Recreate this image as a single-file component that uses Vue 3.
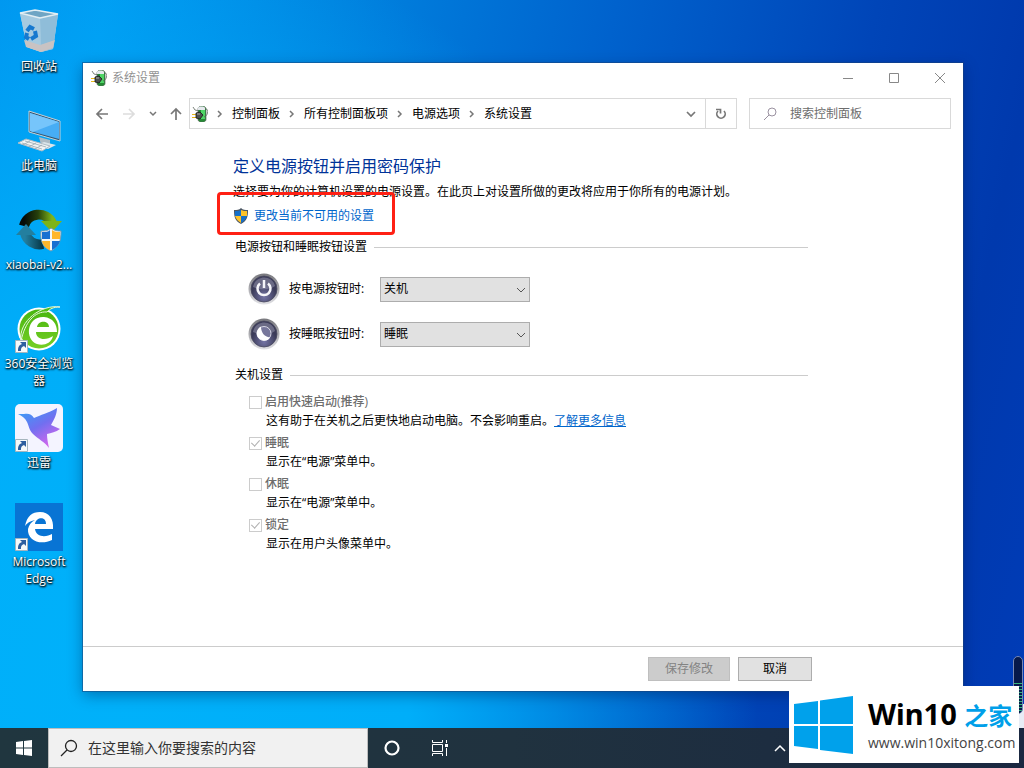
<template>
  <div class="desktop">
    <nav class="desktop-icons">
      <a v-for="item in shortcuts" :key="item.id" href="#" class="desktop-icon" @click.prevent>
        <span class="desktop-icon__picture">
          <svg v-if="item.id === 'recycle'" viewBox="0 0 48 48">
            <path d="M5 5l15-3 23 4-5 35-12 3-14-5z" fill="#b9d7e8" />
            <path d="M5 5l20 5 1 34-14-5z" fill="#a5cae0" />
            <path d="M25 10l18-4-5 35-12 3z" fill="#8fbdd9" />
            <path d="M5 5l15-3 23 4-18 4z" fill="#6fa5c4" stroke="#e2eef3" stroke-width="1.5" />
            <path d="M9 32l16 5 1 7-15-5zM25 37l15-5-2 8-12 4z" fill="#c9c3c3" />
            <g fill="none" stroke="#1679cf" stroke-width="4">
              <path d="M12 23l3-4 4 2" /><path d="M20 23l1 5-5 3" /><path d="M14 31l-3-2 1-4" />
            </g>
          </svg>
          <svg v-else-if="item.id === 'pc'" viewBox="0 0 48 48">
            <path d="M24 30l11 3v4l-9 1z" fill="#aebbc4" />
            <path d="M21 38l8-3 12 3-8 4z" fill="#dce5ea" />
            <path d="M14 4l31 10v20L14 25z" fill="#35536b" stroke="#c2d3dd" />
            <path d="M15 6l29 9v17l-29-8z" fill="#47adf5" />
            <path d="M15 6l29 9-26 10-3-1z" fill="#76c5fb" />
            <path d="M3 36l8-4 24 7-8 5z" fill="#f2f4f5" stroke="#aebcc5" />
            <path d="M7 36l20 6M10 34l21 6M8 38l7-4M14 40l7-4M20 42l7-4" stroke="#9ba8b0" stroke-width=".8" />
          </svg>
          <svg v-else-if="item.id === 'xiaobai'" viewBox="0 0 48 48">
            <defs>
              <linearGradient id="ringTop"><stop stop-color="#050b06" /><stop offset=".5" stop-color="#26400c" /><stop offset="1" stop-color="#7db31a" /></linearGradient>
              <linearGradient id="ringBottom"><stop stop-color="#237f9f" /><stop offset="1" stop-color="#063646" /></linearGradient>
            </defs>
            <path d="M9 20A15 15 0 0 1 37 17" fill="none" stroke="url(#ringTop)" stroke-width="10" />
            <path d="M26 15h21L37 26z" fill="#7db31a" />
            <path d="M10 27A15 15 0 0 0 28 38" fill="none" stroke="url(#ringBottom)" stroke-width="10" />
            <path d="M1 29l10-11 10 11z" fill="#237f9f" />
            <path d="M36 22c4 3 7 3 10 3 0 11-2 15-10 20-8-4-11-9-10-20 4 0 7 0 10-3z" fill="#f4f7f8" stroke="#7b9bae" />
            <path d="M35 24v9h-8v-7c4 0 6 0 8-2zM37 35h8c-1 4-4 7-8 9z" fill="#176fd1" />
            <path d="M37 24c3 2 5 2 8 2v7h-8zM27 35h8v9c-5-2-7-5-8-9z" fill="#ffb72c" />
          </svg>
          <svg v-else-if="item.id === 'browser'" viewBox="0 0 48 48">
            <defs>
              <linearGradient id="leaf" x2="0" y2="1"><stop stop-color="#48b50e" /><stop offset="1" stop-color="#75cf25" /></linearGradient>
            </defs>
            <circle cx="24" cy="24" r="21.500" fill="#fff" />
            <circle cx="24" cy="24" r="19.500" fill="url(#leaf)" />
            <path d="M6 36C3 16 27-1 45 2c-7 0-10 2-13 5C20 6 10 17 6 36z" fill="#52bd15" stroke="#e6f6db" />
            <path fill-rule="evenodd" d="M42 27H21c0 8 10 9 17 4-2 8-10 10-16 8-13-5-10-28 7-27 9 1 13 7 13 15zM22 22h12c0-7-11-7-12 0z" fill="#fff" />
          </svg>
          <svg v-else-if="item.id === 'thunder'" viewBox="0 0 48 48">
            <defs>
              <linearGradient id="bird" x1="0" y1="0" x2=".6" y2="1"><stop stop-color="#31a5f7" /><stop offset=".55" stop-color="#716ff0" /><stop offset="1" stop-color="#cf67ed" /></linearGradient>
            </defs>
            <rect width="48" height="48" rx="5" fill="#f4f4ff" />
            <path d="M3 10l6 0c4-1 8 0 10 4 6-3 15-5 23-10 0 6-3 12-6 17l9 4c-4 3-9 4-13 5 0 5 1 9 2 14-4-6-11-9-16-14-4-4-4-8-6-12-2-4-5-6-9-8z" fill="url(#bird)" />
          </svg>
          <svg v-else viewBox="0 0 48 48">
            <rect width="48" height="48" fill="#0874d4" />
            <path d="M10 23C12 13 17 9 25 9c9 0 14 7 13 17H20c1 9 12 8 17 5v6c-12 6-25 0-24-11 1-4 3-7 7-9-5 1-8 3-10 6zM20 21h11c0-8-10-7-11 0z" fill="#fff" fill-rule="evenodd" />
          </svg>
          <svg v-if="item.linked" class="desktop-icon__arrow" viewBox="0 0 13 13">
            <path d="M.5.5h12v12H.5z" fill="#f7f9fa" stroke="#a5b5be" />
            <path d="M5 2h6v6L9 6c-3 1-3 3-3 5H3c0-4 1-6 4-7z" fill="#2e5e9f" />
          </svg>
        </span>
        <span class="desktop-icon__label">{{ item.label }}</span>
      </a>
    </nav>

    <main class="window">
      <header class="titlebar">
        <svg class="power-icon" viewBox="0 0 16 16"><use href="#powerPlug" /></svg>
        <span class="titlebar__text">系统设置</span>
        <button type="button" class="titlebar__button" aria-label="最小化">
          <svg viewBox="0 0 12 12"><path d="M1 6.500h10" /></svg>
        </button>
        <button type="button" class="titlebar__button" aria-label="最大化">
          <svg viewBox="0 0 12 12"><path d="M1.500 1.500h9v9h-9z" /></svg>
        </button>
        <button type="button" class="titlebar__button" aria-label="关闭">
          <svg viewBox="0 0 12 12"><path d="M1 1l10 10M11 1L1 11" /></svg>
        </button>
      </header>

      <div class="toolbar">
        <div class="toolbar__history">
          <button type="button" aria-label="后退"><svg viewBox="0 0 16 16"><path d="M14 8H3M8 3L3 8l5 5" /></svg></button>
          <button type="button" aria-label="前进" disabled><svg viewBox="0 0 16 16"><path d="M2 8h11M8 3l5 5-5 5" /></svg></button>
          <button type="button" class="toolbar__recent" aria-label="最近"><svg viewBox="0 0 8 16"><path d="M1 6l3 3 3-3" /></svg></button>
          <button type="button" aria-label="向上"><svg viewBox="0 0 16 16"><path d="M8 14V3M3 8l5-5 5 5" /></svg></button>
        </div>
        <div class="address">
          <svg class="power-icon" viewBox="0 0 16 16">
            <g id="powerPlug">
              <path d="M6 3c0-4 8-4 8 0v11c-1 3-7 3-8 0z" fill="#258a35" stroke="#5d655e" stroke-width=".7" />
              <path d="M6 2c0-2 7-2 7 0v2H6z" fill="#e5e9ed" />
              <path d="M9 4h4v9H9z" fill="#4fd566" />
              <path d="M1 1l2 3 4 1M14 3c3 0 2 7-2 8" fill="none" stroke="#59635b" stroke-width=".8" />
              <path d="M0 8h5v1H0zM0 11h5v1H0z" fill="#e8b91b" />
              <path d="M4 7l4-1 3 3-3 4-4-1z" fill="#4c504e" stroke="#161816" stroke-width=".8" />
              <path d="M5 8h3" stroke="#aaa" stroke-width="1" />
            </g>
          </svg>
          <template v-for="crumb in crumbs" :key="crumb">
            <svg class="address__arrow" viewBox="0 0 8 8"><path d="M2 1l3 3-3 3" /></svg>
            <a href="#" @click.prevent>{{ crumb }}</a>
          </template>
          <button type="button" class="address__history" aria-label="以前的位置"><svg viewBox="0 0 16 16"><path d="M4 6l4 4 4-4" /></svg></button>
          <button type="button" class="address__refresh" aria-label="刷新">
            <svg viewBox="0 0 16 16"><path d="M11 5a4.200 4.200 0 1 1-6 0M3 3.500h4.500v4" /></svg>
          </button>
        </div>
        <label class="panel-search">
          <svg viewBox="0 0 16 16"><circle cx="10" cy="6" r="4" /><path d="M7 9l-5 5" /></svg>
          <input v-model="panelQuery" type="text" placeholder="搜索控制面板" aria-label="搜索控制面板" />
        </label>
      </div>

      <section class="content">
        <h1>定义电源按钮并启用密码保护</h1>
        <p class="intro">选择要为你的计算机设置的电源设置。在此页上对设置所做的更改将应用于你所有的电源计划。</p>
        <div class="elevate">
          <svg viewBox="0 0 16 16">
            <path d="M8 0c2 2 4 2 7 2 0 7-1 11-7 14-6-3-7-7-7-14 3 0 5 0 7-2z" fill="#4b5663" />
            <path d="M8 2v6h6c-1 3-3 5-6 7V8H2V3c2 0 4 0 6-1z" fill="#1670c9" />
            <path d="M8 2c2 1 4 1 6 1v5H8zM2 8h6v7C5 13 3 11 2 8z" fill="#ffc328" />
          </svg>
          <a href="#" @click.prevent>更改当前不可用的设置</a>
        </div>

        <h2>电源按钮和睡眠按钮设置</h2>
        <div v-for="row in buttonRows" :key="row.id" class="button-row">
          <svg viewBox="0 0 32 32">
            <defs>
              <linearGradient id="rim" x2="0" y2="1"><stop stop-color="#77777c" /><stop offset="1" stop-color="#e1e1e5" /></linearGradient>
              <radialGradient id="knob" cy=".8"><stop stop-color="#7474a5" /><stop offset="1" stop-color="#3b3b58" /></radialGradient>
            </defs>
            <circle cx="16" cy="16" r="15.500" fill="url(#rim)" />
            <circle cx="16" cy="16" r="13" fill="url(#knob)" stroke="#4a4a60" stroke-width=".8" />
            <path d="M5 14c2-12 19-13 22-1-5 4-15 4-22 1z" fill="#a6a6bc" opacity=".45" />
            <g v-if="row.id === 'power'" fill="none" stroke="#f6f6fa" stroke-width="2.500">
              <path d="M12 10.500a6.500 6.500 0 1 0 8 0" /><path d="M16 7v8" />
            </g>
            <g v-else>
              <circle cx="16" cy="15.500" r="7" fill="#77779b" stroke="#d8d8e4" />
              <path d="M13 8.500c-7 4-5 14 4 14 2 0 4-1 5-3-6-1-9-5-9-11z" fill="#fff" />
            </g>
          </svg>
          <label :for="row.id">{{ row.label }}</label>
          <span class="drop-down">
            <select :id="row.id" v-model="row.value">
              <option v-for="option in options" :key="option">{{ option }}</option>
            </select>
            <svg viewBox="0 0 10 10"><path d="M1 3l4 4 4-4" /></svg>
          </span>
        </div>

        <h2 class="shutdown-title">关机设置</h2>
        <div v-for="item in shutdownItems" :key="item.id" class="check-row">
          <input :id="item.id" v-model="item.checked" type="checkbox" disabled />
          <label :for="item.id">{{ item.label }}</label>
          <p>{{ item.hint }}<a v-if="item.link" href="#" @click.prevent>{{ item.link }}</a></p>
        </div>
      </section>

      <footer class="actions">
        <button type="button" class="actions__save" disabled>保存修改</button>
        <button type="button" class="actions__cancel">取消</button>
      </footer>
      <div class="highlight"></div>
    </main>

    <footer class="taskbar">
      <button type="button" class="taskbar__button" aria-label="开始">
        <svg viewBox="0 0 16 16"><path d="M0 2l7-1v6.500H0zM8 1l8-1v7.500H8zM0 8.500h7V15l-7-1zM8 8.500h8V16l-8-1z" fill="#fff" /></svg>
      </button>
      <label class="taskbar__search">
        <svg viewBox="0 0 18 18"><circle cx="11" cy="7" r="5.500" /><path d="M7 11l-6 6" /></svg>
        <input v-model="taskQuery" type="text" placeholder="在这里输入你要搜索的内容" aria-label="在这里输入你要搜索的内容" />
      </label>
      <button type="button" class="taskbar__button" aria-label="Cortana">
        <svg viewBox="0 0 16 16"><circle cx="8" cy="8" r="6.500" fill="none" stroke="#fff" stroke-width="2.200" /></svg>
      </button>
      <button type="button" class="taskbar__button" aria-label="任务视图">
        <svg viewBox="0 0 16 16"><path d="M.5 0v2.500h10V0M.5 4.500h10v7H.5zM.5 16v-2.500h10V16M14.500 0v3M14.500 8v8" fill="none" stroke="#fff" /><path d="M13 4h3v3h-3z" fill="#fff" /></svg>
      </button>
      <button type="button" class="taskbar__tray" aria-label="显示隐藏的图标">
        <svg viewBox="0 0 12 12"><path d="M1 9l5-5 5 5" fill="none" stroke="#fff" stroke-width="1.500" /></svg>
      </button>
    </footer>

    <div class="meter-panel"></div>
    <div class="meter"><span></span></div>
    <aside class="brand">
      <svg viewBox="0 0 60 60"><path d="M0 9l24-3v23H0zM26 5.500L59 1v28H26zM0 31h24v23L0 51zM26 31h33v28l-33-4z" fill="#00a1eb" /></svg>
      <div>
        <p class="brand__name">Win10 <span>之家</span></p>
        <p class="brand__site">www.win10xitong.com</p>
      </div>
    </aside>
  </div>
</template>

<script setup>
import { ref } from 'vue'

const panelQuery = ref('')
const taskQuery = ref('')

const shortcuts = [
  { id: 'recycle', label: '回收站' },
  { id: 'pc', label: '此电脑' },
  { id: 'xiaobai', label: 'xiaobai-v2...' },
  { id: 'browser', label: '360安全浏览器', linked: true },
  { id: 'thunder', label: '迅雷', linked: true },
  { id: 'edge', label: 'Microsoft Edge', linked: true }
]

const crumbs = ['控制面板', '所有控制面板项', '电源选项', '系统设置']
const options = ['关机', '睡眠', '休眠', '不采取任何操作']

const buttonRows = ref([
  { id: 'power', label: '按电源按钮时:', value: '关机' },
  { id: 'sleep', label: '按睡眠按钮时:', value: '睡眠' }
])

const shutdownItems = ref([
  { id: 'fast', label: '启用快速启动(推荐)', hint: '这有助于在关机之后更快地启动电脑。不会影响重启。', link: '了解更多信息', checked: false },
  { id: 'suspend', label: '睡眠', hint: '显示在“电源”菜单中。', checked: true },
  { id: 'hibernate', label: '休眠', hint: '显示在“电源”菜单中。', checked: false },
  { id: 'lock', label: '锁定', hint: '显示在用户头像菜单中。', checked: true }
])
</script>

<style>
body {
  margin: 0;
}
</style>

<style scoped>
.desktop {
  position: relative;
  display: flex;
  flex-direction: column;
  min-height: 100vh;
  overflow: hidden;
  background: linear-gradient(102deg, #0094ee 0%, #009cf2 9%, #0084e0 28%, #0062cd 52%, #0045b8 74%, #0039ad 88%, #003cb8 100%);
  color: #000;
  font: 12px/18px "Open Sans", "Noto Sans CJK SC", sans-serif;
}

.desktop::before {
  content: '';
  position: absolute;
  inset: 0;
  background: radial-gradient(ellipse 62% 100% at 12% 90%, #00b1fa 0%, #00aef9 45%, transparent 100%);
}

h1,
h2,
p {
  margin: 0;
  font-weight: 400;
}

button,
input,
select {
  margin: 0;
  font: inherit;
}

button {
  display: flex;
  align-items: center;
  justify-content: center;
  padding: 0;
  border: 0;
  background: transparent;
}

svg {
  display: block;
  flex-shrink: 0;
}

.desktop-icons {
  position: relative;
  display: flex;
  flex: 1;
  flex-direction: column;
  width: 78px;
  padding-top: 8px;
}

.desktop-icon {
  display: flex;
  flex-direction: column;
  align-items: center;
  height: 99px;
  color: #fff;
  text-decoration: none;
}

.desktop-icon__picture {
  position: relative;
  width: 48px;
  height: 48px;
}

.desktop-icon__arrow {
  position: absolute;
  bottom: 0;
  left: 0;
  width: 13px;
}

.desktop-icon__label {
  width: 72px;
  margin-top: 2px;
  line-height: 17px;
  text-align: center;
  text-shadow: 1px 1px 2px #000, 0 1px 2px #000;
}

.window {
  position: absolute;
  inset: 63px 61px 77px 83px;
  display: flex;
  flex-direction: column;
  background: #fff;
  box-shadow: 0 0 0 1px rgba(25, 65, 120, 0.5), 0 4px 14px rgba(0, 20, 70, 0.4);
}

.titlebar {
  display: flex;
  align-items: center;
  height: 29px;
  padding-left: 8px;
  color: #929292;
}

.titlebar__text {
  flex: 1;
  padding-left: 5px;
}

.titlebar__button {
  width: 46px;
  height: 29px;
}

.titlebar__button svg {
  width: 12px;
  fill: none;
  stroke: #888;
}

.power-icon {
  width: 16px;
  height: 16px;
}

.toolbar {
  display: flex;
  height: 31px;
  margin-top: 6px;
  padding-right: 12px;
}

.toolbar svg {
  width: 16px;
  fill: none;
  stroke: #777;
  stroke-width: 1.7;
}

.toolbar .power-icon {
  stroke: none;
}

.toolbar__history {
  display: flex;
  align-items: center;
  justify-content: space-between;
  width: 90px;
  margin: 0 5px 0 11px;
}

.toolbar__history button:disabled svg {
  stroke: #ddd;
}

.address,
.panel-search {
  display: flex;
  align-items: center;
  box-sizing: border-box;
  border: 1px solid #d9d9d9;
}

.address {
  flex: 1;
  padding-left: 2px;
}

.address a {
  color: #000;
  text-decoration: none;
}

.toolbar .address__arrow {
  width: 8px;
  margin: 0 8px;
}

.toolbar .toolbar__recent svg {
  width: 8px;
}

.toolbar .address__arrow,
.toolbar .toolbar__recent svg {
  stroke-width: 1.5;
}

.address__history {
  width: 28px;
  margin-left: auto;
}

.address__refresh {
  width: 31px;
  height: 29px;
  border-left: 1px solid #d9d9d9;
}

.panel-search {
  width: 202px;
  margin-left: 12px;
  padding-left: 12px;
}

.toolbar .panel-search svg {
  stroke: #9a91a0;
  stroke-width: 1;
}

.panel-search input,
.taskbar__search input {
  flex: 1;
  min-width: 0;
  padding: 0;
  border: 0;
  outline: 0;
  background: transparent;
}

.panel-search input {
  margin-left: 12px;
}

.panel-search input::placeholder {
  color: #6d6d6d;
}

.content {
  flex: 1;
  padding: 25px 155px 0 150px;
}

h1 {
  color: #003399;
  font-size: 16px;
  line-height: 24px;
}

.intro {
  margin-top: 5px;
  white-space: nowrap;
}

.elevate {
  display: flex;
  align-items: center;
  gap: 5px;
  margin-top: 6px;
}

.elevate svg {
  width: 16px;
}

a {
  color: #0066cc;
}

.elevate a {
  text-decoration: none;
}

.highlight {
  position: absolute;
  top: 129px;
  left: 134px;
  box-sizing: border-box;
  width: 178px;
  height: 43px;
  border: 3px solid #ff2014;
  border-radius: 4px;
  pointer-events: none;
}

h2 {
  display: flex;
  align-items: center;
  gap: 7px;
  margin: 13px 0 17px 2px;
  font-size: 12px;
}

h2::after {
  content: '';
  flex: 1;
  height: 1px;
  background: #ccc;
}

.button-row {
  display: flex;
  align-items: center;
  height: 32px;
  margin: 0 0 13px 15px;
}

.button-row > svg {
  width: 32px;
}

.button-row label {
  width: 91px;
  margin-left: 9px;
}

.drop-down {
  position: relative;
}

.drop-down select {
  display: block;
  width: 150px;
  height: 25px;
  padding: 0 3px;
  border: 1px solid #adadad;
  border-radius: 0;
  appearance: none;
  background: #e1e1e1;
  color: #000;
}

.drop-down svg {
  position: absolute;
  top: 8px;
  right: 4px;
  width: 10px;
  fill: none;
  stroke: #555;
  pointer-events: none;
}

h2.shutdown-title {
  margin: 16px 0 9px 2px;
}

.check-row {
  display: grid;
  grid-template-columns: 13px 1fr;
  column-gap: 3px;
  align-items: center;
  margin: 0 0 4px 16px;
}

.check-row input {
  position: relative;
  width: 13px;
  height: 13px;
  border: 1px solid #ccc;
  appearance: none;
  background: #fff;
}

.check-row input:checked::after {
  content: '';
  position: absolute;
  top: 0;
  left: 3px;
  width: 4px;
  height: 7px;
  border: solid #b0b0b0;
  border-width: 0 1px 1px 0;
  transform: rotate(42deg);
}

.check-row label {
  color: #6d6d6d;
  font-weight: 500;
}

.check-row p {
  grid-column: 2;
  padding-left: 1px;
  line-height: 19px;
}

.actions {
  display: flex;
  gap: 8px;
  justify-content: flex-end;
  height: 34px;
  padding: 10px 151px 0 0;
  border-top: 1px solid #ccc;
}

.actions button {
  box-sizing: border-box;
  height: 24px;
  border: 1px solid #adadad;
}

.actions__save {
  width: 82px;
  background: #ccc;
  color: #838383;
}

.actions .actions__save {
  border-color: #bfbfbf;
}

.actions__cancel {
  width: 74px;
  background: #e1e1e1;
  color: #000;
}

.taskbar {
  position: relative;
  display: flex;
  height: 40px;
  background: linear-gradient(90deg, #20363f, #20323f 50%, #1a2841);
}

.taskbar__button {
  width: 48px;
}

.taskbar__button svg {
  width: 16px;
}

.taskbar__search {
  display: flex;
  align-items: center;
  box-sizing: border-box;
  width: 320px;
  padding-left: 11px;
  border: 1px solid #bdbdbd;
  background: #f1f1f1;
  font-size: 14px;
}

.taskbar__search svg {
  width: 18px;
  fill: none;
  stroke: #222;
  stroke-width: 1.3;
}

.taskbar__search input {
  margin-left: 10px;
}

.taskbar__search input::placeholder {
  color: #333;
}

.taskbar__tray {
  width: 24px;
  margin: 0 232px 0 auto;
}

.taskbar__tray svg {
  width: 12px;
}

.meter-panel {
  position: absolute;
  right: 0;
  bottom: 40px;
  width: 10px;
  height: 24px;
  background: #e8edf6;
}

.meter {
  position: absolute;
  right: 1px;
  bottom: 54px;
  display: flex;
  align-items: flex-end;
  box-sizing: border-box;
  width: 10px;
  height: 58px;
  border: 1px solid #7788b5;
  border-radius: 5px;
  overflow: hidden;
  background: #06194b;
}

.meter span {
  width: 100%;
  height: 30px;
  background: repeating-linear-gradient(#35b77c 0 1px, #06194b 1px 3px);
}

.brand {
  position: absolute;
  right: 5px;
  bottom: 5px;
  display: flex;
  align-items: center;
  gap: 14px;
  box-sizing: border-box;
  width: 230px;
  height: 77px;
  padding-left: 5px;
  background: #fff;
  white-space: nowrap;
}

.brand svg {
  width: 60px;
}

.brand__name {
  font-family: "Noto Sans", "Noto Sans CJK SC", sans-serif;
  font-size: 29px;
  font-weight: 700;
  line-height: 34px;
}

.brand__name span {
  color: #009fe9;
  font-size: 24px;
}

.brand__site {
  color: #444;
  font-size: 14px;
  line-height: 20px;
}
</style>
